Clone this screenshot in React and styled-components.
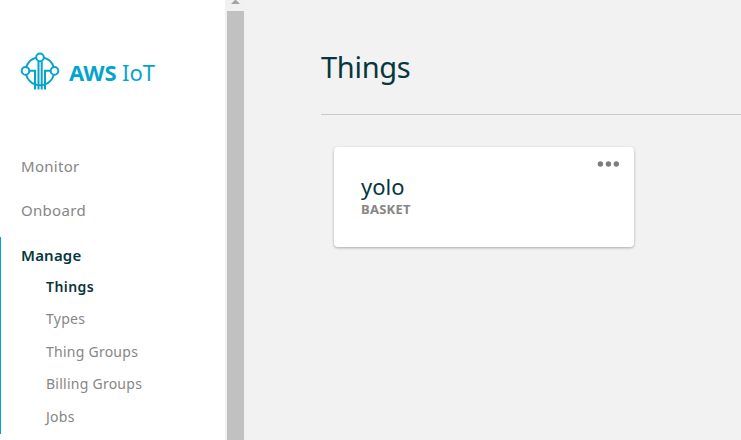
import React from "react";
import styled, { createGlobalStyle } from "styled-components";

const Global = createGlobalStyle`
  * { box-sizing: border-box; }
  body { margin: 0; overflow: hidden; font-family: "Noto Sans", sans-serif; }
`;
const Page = styled.div`
  display: flex;
  width: 741px;
  height: 440px;
  background: #f2f2f2;
  overflow: hidden;
`;
const Sidebar = styled.aside`
  width: 225px;
  flex: none;
  background: #fff;
`;
const Brand = styled.div`
  display: flex;
  align-items: center;
  height: 44px;
  margin: 50px 0 0 18px;
  color: #05a4cc;
`;
const BrandName = styled.span`
  margin-left: 7px;
  font-size: 22px;
  line-height: 46px;
  font-weight: 400;
  white-space: nowrap;
  letter-spacing: -0.1px;
  b { font-weight: 700; }
`;
const Nav = styled.nav`
  display: flex;
  flex-direction: column;
  padding-top: 50px;
`;
const NavItem = styled.a`
  height: 44px;
  padding-left: 21px;
  font-size: 15px;
  line-height: 45px;
  color: ${(p) => (p.$active ? "#073640" : "#868686")};
  font-weight: ${(p) => (p.$active ? 600 : 400)};
  letter-spacing: 0.3px;
`;
const Group = styled.div`
  display: flex;
  flex-direction: column;
  height: 197px;
  margin-top: 5px;
  border-left: 1px solid #05a4cc;
`;
const GroupTitle = styled(NavItem)`
  height: 34px;
  padding-left: 20px;
  line-height: 37px;
  letter-spacing: 0.2px;
`;
const SubItem = styled(NavItem)`
  height: 32.4px;
  padding-left: 45px;
  font-size: 14px;
  line-height: 31px;
  letter-spacing: ${(p) => (p.$active ? 0.45 : 0.25)}px;
`;
const Scrollbar = styled.div`
  display: flex;
  flex-direction: column;
  flex: none;
  width: 20px;
  padding: 0 1px 0 2px;
  background: #f1f1f1;
`;
const Arrow = styled.svg`
  display: block;
  width: 17px;
  height: 11px;
  flex: none;
`;
const Thumb = styled.div`
  flex: 1;
  background: #c1c1c1;
`;
const Main = styled.main`
  flex: 1;
  padding-left: 76px;
`;
const Header = styled.header`
  height: 115px;
  padding-top: 47px;
  border-bottom: 1px solid #c9c9c9;
`;
const Title = styled.h1`
  margin: 0;
  font-size: 29px;
  line-height: 40px;
  font-weight: 400;
  color: #073640;
  letter-spacing: -0.3px;
`;
const Card = styled.article`
  display: flex;
  justify-content: space-between;
  width: 300px;
  height: 100px;
  margin: 32px 0 0 13px;
  padding: 14px 15px 0 27px;
  border-radius: 4px;
  background: #fff;
  box-shadow: 0 1px 3px rgba(0, 0, 0, 0.3);
`;
const CardName = styled.h2`
  margin: 10px 0 0;
  font-size: 22px;
  line-height: 30px;
  font-weight: 400;
  color: #073640;
`;
const CardType = styled.div`
  font-size: 13px;
  line-height: 16px;
  font-weight: 700;
  color: #868686;
  letter-spacing: 0.25px;
`;
const Menu = styled.svg`
  display: block;
  width: 22px;
  height: 6px;
  fill: #7d7d7d;
`;

function Logo() {
  return (
    <svg width="44" height="44" viewBox="0 0 44 44" fill="none" stroke="currentColor" strokeWidth="2">
      <path d="M18 7.7A14.4 14.4 0 0 0 8.2 17M26 7.7A14.4 14.4 0 0 1 35.8 17M8.2 24.7A14.4 14.4 0 0 0 17 34.4Q22 36 27 34.4A14.4 14.4 0 0 0 35.8 24.7" />
      <circle cx="22" cy="7.4" r="3.8" />
      <circle cx="7.5" cy="20.9" r="3.8" />
      <circle cx="36.5" cy="20.9" r="3.8" />
      <path d="M11 20.8H17V39.5M33 20.8H27V39.5M20.5 11V39.5M23.7 11V39.5" />
    </svg>
  );
}

export default function App() {
  return (
    <>
      <Global />
      <Page>
        <Sidebar>
          <Brand>
            <Logo />
            <BrandName><b>AWS</b> IoT</BrandName>
          </Brand>
          <Nav>
            <NavItem>Monitor</NavItem>
            <NavItem>Onboard</NavItem>
            <Group>
              <GroupTitle $active>Manage</GroupTitle>
              <SubItem $active>Things</SubItem>
              <SubItem>Types</SubItem>
              <SubItem>Thing Groups</SubItem>
              <SubItem>Billing Groups</SubItem>
              <SubItem>Jobs</SubItem>
            </Group>
          </Nav>
        </Sidebar>
        <Scrollbar>
          <Arrow viewBox="0 0 17 11"><path d="M4 4L8.5 -.5L13 4Z" fill="#a3a3a3" /></Arrow>
          <Thumb />
        </Scrollbar>
        <Main>
          <Header><Title>Things</Title></Header>
          <Card>
            <div>
              <CardName>yolo</CardName>
              <CardType>BASKET</CardType>
            </div>
            <Menu viewBox="0 0 22 6">
              <circle cx="3.4" cy="3" r="2.7" />
              <circle cx="11.4" cy="3" r="2.7" />
              <circle cx="19.3" cy="3" r="2.7" />
            </Menu>
          </Card>
        </Main>
      </Page>
    </>
  );
}
